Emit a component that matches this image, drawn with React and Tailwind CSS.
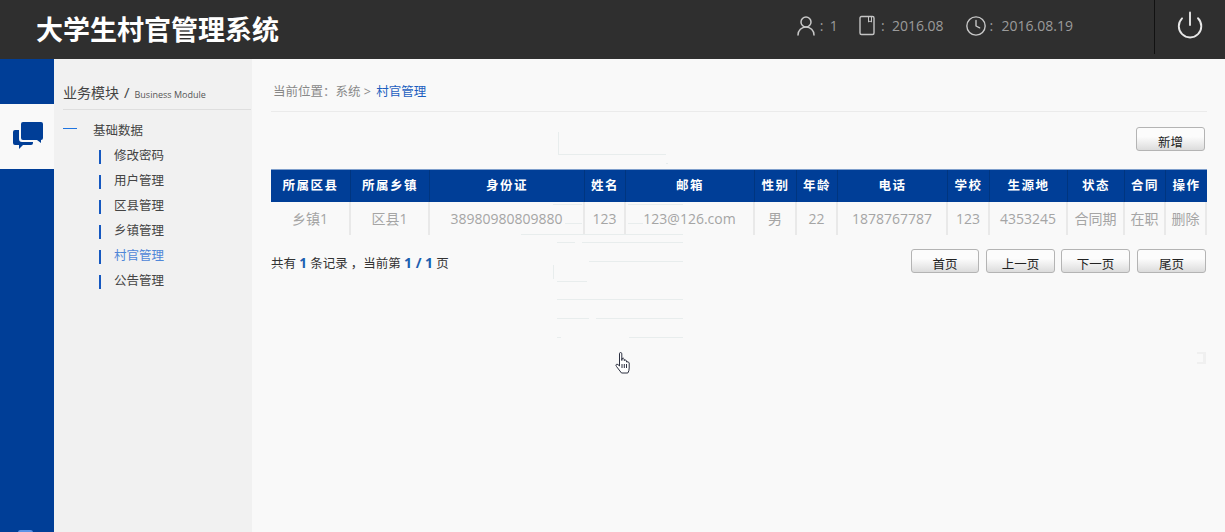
import { Clock, Power, UserRound } from "lucide-react";

const menus = ["修改密码", "用户管理", "区县管理", "乡镇管理", "村官管理", "公告管理"];

const columns = [
  { title: "所属区县", value: "乡镇1", width: "w-[80px]" },
  { title: "所属乡镇", value: "区县1", width: "w-[79px]" },
  { title: "身份证", value: "38980980809880", width: "w-[155px]" },
  { title: "姓名", value: "123", width: "w-[41px]" },
  { title: "邮箱", value: "123@126.com", width: "w-[129px]" },
  { title: "性别", value: "男", width: "w-[42px]" },
  { title: "年龄", value: "22", width: "w-[41px]" },
  { title: "电话", value: "1878767787", width: "w-[110px]" },
  { title: "学校", value: "123", width: "w-[42px]" },
  { title: "生源地", value: "4353245", width: "w-[78px]" },
  { title: "状态", value: "合同期", width: "w-[57px]" },
  { title: "合同", value: "在职", width: "w-[41px]" },
  { title: "操作", value: "删除", width: "w-[41px]" },
];

// leftover streaks over the page
const streaks = [
  "left-[558px] top-[132px] w-px h-[22px]",
  "left-[558px] top-[154px] w-[108px] h-px",
  "left-[666px] top-[163px] w-[2px] h-px",
  "left-[553px] top-[204px] w-[29px] h-px",
  "left-[628px] top-[204px] w-[55px] h-px",
  "left-[565px] top-[223px] w-[17px] h-px",
  "left-[628px] top-[223px] w-[15px] h-px",
  "left-[521px] top-[234px] w-[162px] h-px",
  "left-[557px] top-[242px] w-[18px] h-px",
  "left-[582px] top-[242px] w-[101px] h-px",
  "left-[589px] top-[261px] w-[94px] h-px",
  "left-[553px] top-[265px] w-px h-[14px]",
  "left-[557px] top-[281px] w-[30px] h-px",
  "left-[557px] top-[299px] w-[126px] h-px",
  "left-[557px] top-[318px] w-[32px] h-px",
  "left-[596px] top-[318px] w-[87px] h-px",
  "left-[629px] top-[337px] w-[54px] h-px",
  "left-[557px] top-[337px] w-[4px] h-px",
];

const PageButton = ({ label, className = "" }) => (
  <button className={`w-[69px] h-[24px] rounded-[3px] border border-[#b4b4b4] bg-gradient-to-b from-[#fcfcfc] from-40% to-[#dcdcdc] text-[12.500px] leading-none text-[#222] pt-[9px] ${className}`}>
    {label}
  </button>
);

const BookIcon = () => (
  <svg width="18" height="21" viewBox="0 0 18 21" fill="none" stroke="#c4c4c4" strokeWidth="1.4">
    <rect x="2" y="1.500" width="14" height="18" rx="1.500" />
    <path d="M10.500 2v5l1.500-1 1.500 1V2" strokeWidth="1" />
  </svg>
);

const ChatIcon = () => (
  <svg width="30" height="27" viewBox="0 0 30 27" fill="#003e97">
    <path d="M10 0H28Q30 0 30 2V16Q30 18 28 18V21L24 18H10Q8 18 8 16V2Q8 0 10 0Z" />
    <path d="M2 8H6V17Q6 20 9 20H20V21Q20 23 18 23H10L6 27V23H2Q0 23 0 21V10Q0 8 2 8Z" />
  </svg>
);

const HandCursor = () => (
  <svg width="16" height="22" viewBox="0 0 16 22" fill="#fff" stroke="#2c3040" strokeWidth="1" strokeLinejoin="round">
    <path d="M4.500 1.800Q4.500 .5 5.600 .5T6.800 1.800V8.500L7 6.500Q8.500 5.500 9.200 7V8.500Q10.800 7 11.500 9V10Q13.500 9 14.200 11V16Q14.200 19 12.800 21H6.500L1.500 14.500Q.2 12.800 1.500 12.300T4.500 14Z" />
    <path d="M7 12v4M9.300 12v4M11.500 12v4" fill="none" />
  </svg>
);

export default function App() {
  return (
    <div className="relative h-screen flex flex-col overflow-hidden bg-[#f9f9f9] [text-spacing-trim:space-all] font-['Open_Sans','Noto_Sans_CJK_SC',sans-serif]">
      {/* Header */}
      <div className="h-[59px] shrink-0 flex items-start bg-[#2f2f2f] text-[#9b9b9b]">
        <h1 className="ml-[36px] mt-[11px] text-[27px] leading-[38px] font-bold text-white">大学生村官管理系统</h1>
        <div className="ml-auto h-[54px] flex items-center text-[14px]">
          <div className="flex items-center mb-[3px]">
            <UserRound size={24} strokeWidth={1.5} className="text-[#c8c8c8]" />
            <span className="ml-[2px] w-[10px]">:</span>
            <span>1</span>
            <div className="ml-[20px]"><BookIcon /></div>
            <span className="ml-[5px] w-[11px]">:</span>
            <span>2016.08</span>
            <Clock size={22} strokeWidth={1.5} className="ml-[21px] text-[#c8c8c8]" />
            <span className="ml-[3px] w-[12px]">:</span>
            <span>2016.08.19</span>
          </div>
          <div className="ml-[81px] w-[71px] h-full border-l border-[#111] flex items-center justify-center">
            <Power size={30} strokeWidth={1.5} className="text-[#e8e8e8] mb-[5px]" />
          </div>
        </div>
      </div>

      <div className="flex-1 flex min-h-0">
        {/* Icon rail */}
        <div className="relative w-[54px] shrink-0 pt-[45px] bg-[#003e97] overflow-hidden">
          <div className="h-[65px] bg-[#f9f9f9] flex items-center justify-center pl-[1px] pb-[2px]">
            <ChatIcon />
          </div>
          <div className="absolute left-[18px] bottom-[-3px] w-[15px] h-[5px] rounded-full bg-[#5b93e6]"></div>
        </div>

        {/* Menu */}
        <div className="w-[198px] shrink-0 bg-[#f1f1f1] pl-[9px] pr-[1px]">
          <div className="mt-[22px] h-[29px] border-b border-[#dedede] flex items-baseline text-[#444]">
            <span className="text-[14px] leading-[24px]">业务模块</span>
            <span className="ml-[5px] text-[15px]">/</span>
            <span className="ml-[5px] text-[9px] text-[#555]">Business Module</span>
          </div>
          <div className="mt-[10px] flex items-center h-[24px] text-[12.500px] text-[#444]">
            <span className="w-[14px] h-px bg-[#1f74e0] mb-[7px]"></span>
            <span className="ml-[16px] mb-[2px]">基础数据</span>
          </div>
          {menus.map((name) => (
            <div key={name} className="flex items-center h-[25px] pl-[36px] text-[12.500px]">
              <span className="w-[2px] h-[14px] bg-[#1558c0]"></span>
              <span className={`ml-[13px] ${name === "村官管理" ? "text-[#4f86d8]" : "text-[#444]"}`}>{name}</span>
            </div>
          ))}
        </div>

        {/* Content */}
        <div className="flex-1 pl-[19px] pr-[18px]">
          <div className="h-[53px] pt-[24px] pl-[2px] border-b border-[#ebebeb] text-[12.500px] leading-[18px] text-[#888]">
            当前位置：系统 &gt; <span className="ml-[2px] text-[#1d5fc0]">村官管理</span>
          </div>
          <div className="mt-[15px] h-[42px] pr-[2px] flex justify-end items-start">
            <PageButton label="新增" />
          </div>

          <div className="w-[936px]">
            <div className="flex h-[33px] bg-[#003e97] border-t border-[#7f9fcc]">
              {columns.map((col) => (
                <div key={col.title} className={`${col.width} pt-[1px] flex items-center justify-center border-r border-[#00357f] text-[12.500px] font-bold tracking-[1.500px] text-white whitespace-nowrap last:border-r-0`}>
                  {col.title}
                </div>
              ))}
            </div>
            <div className="flex h-[33px]">
              {columns.map((col) => (
                <div key={col.title} className={`${col.width} flex items-center justify-center border-r-2 border-[#e9e9e9] text-[14px] text-[#a5a5a5] whitespace-nowrap`}>
                  {col.value}
                </div>
              ))}
            </div>
          </div>

          <div className="mt-[14px] w-[935px] flex items-start justify-between">
            <p className="mt-[3px] text-[12.500px] text-[#333]">
              共有 <b className="text-[#1c5fb0] text-[13.500px]">1</b> 条记录<span className="ml-[3px]">，</span>当前第 <b className="text-[#1c5fb0] text-[14px]">1 / 1</b> 页
            </p>
            <div className="flex gap-[7px]">
              <PageButton label="首页" className="!w-[68px]" />
              <PageButton label="上一页" className="-mr-[1px]" />
              <PageButton label="下一页" />
              <PageButton label="尾页" />
            </div>
          </div>
        </div>
      </div>

      {streaks.map((pos) => (
        <div key={pos} className={`absolute bg-[#e8eded] ${pos}`}></div>
      ))}
      <div className="absolute left-[1197px] top-[352px] w-[9px] h-[12px] border-y-[2px] border-r-[3px] border-[#f0f0f0]"></div>
      <div className="absolute left-[615px] top-[352px]">
        <HandCursor />
      </div>
    </div>
  );
}
